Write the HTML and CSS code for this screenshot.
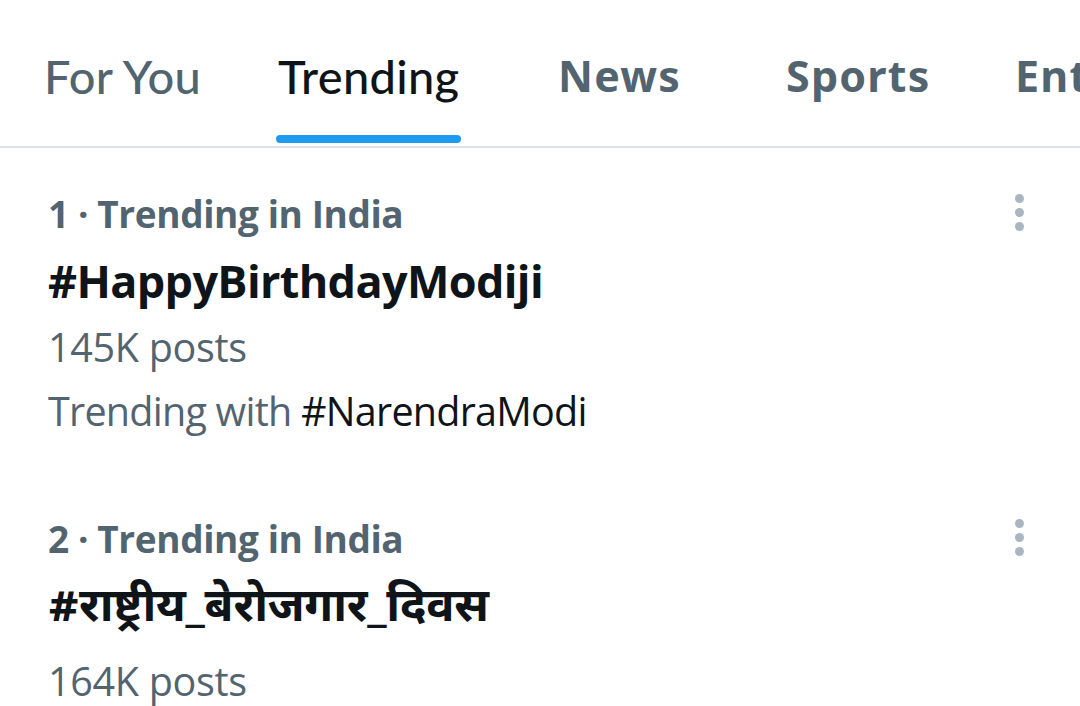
FILE: index.html
```html
<!DOCTYPE html>
<html lang="en">
<head>
<meta charset="utf-8">
<link rel="stylesheet" href="styles.css">
</head>
<body>
<nav class="tabs">
  <div class="tab tab-foryou"><span class="tab-label">For You</span></div>
  <div class="tab tab-trending active"><span class="tab-inner"><span class="tab-label">Trending</span><span class="tab-bar"></span></span></div>
  <div class="tab tab-news"><span class="tab-label bold">News</span></div>
  <div class="tab tab-sports"><span class="tab-label bold">Sports</span></div>
  <div class="tab tab-ent"><span class="tab-label bold">Entertainment</span></div>
</nav>
<main class="list">
  <section class="trend">
    <div class="trend-body">
      <div class="trend-meta">1 · Trending in India</div>
      <div class="trend-title">#HappyBirthdayModiji</div>
      <div class="trend-count">145K posts</div>
      <div class="trend-with">Trending with <span class="trend-tag">#NarendraModi</span></div>
    </div>
    <div class="more"><span class="dot"></span><span class="dot"></span><span class="dot"></span></div>
  </section>
  <section class="trend">
    <div class="trend-body">
      <div class="trend-meta">2 · Trending in India</div>
      <div class="trend-title hindi">#राष्ट्रीय_बेरोजगार_दिवस</div>
      <div class="trend-count">164K posts</div>
    </div>
    <div class="more"><span class="dot"></span><span class="dot"></span><span class="dot"></span></div>
  </section>
</main>
</body>
</html>
```
FILE: styles.css
```css
html, body {
  margin: 0;
  padding: 0;
  background: #ffffff;
  overflow: hidden;
}
body {
  width: 1080px;
  height: 706px;
  font-family: "Open Sans", "Noto Sans", sans-serif;
  color: #0f1419;
}
.tabs {
  display: flex;
  border-bottom: 2px solid #dfe3e6;
  padding-left: 44px;
  box-sizing: border-box;
  height: 148px;
  white-space: nowrap;
  overflow: hidden;
}
.tab {
  flex: none;
  display: flex;
  align-items: flex-start;
  padding-top: 49px;
}
.tab-foryou { width: 234px; }
.tab-trending { width: 280px; }
.tab-news { width: 228px; }
.tab-sports { width: 229px; }
.tab-ent { width: 200px; }
.tab-label {
  font-family: "Lato", sans-serif;
  font-size: 47px;
  line-height: 54px;
  color: #536471;
  font-weight: 500;
  letter-spacing: 0.3px;
}
.tab-label.bold {
  font-family: "Noto Sans", sans-serif;
  font-weight: 700;
  font-size: 43px;
  letter-spacing: 1.2px;
}
.active .tab-label {
  color: #0f1419;
}
.tab-inner {
  display: inline-flex;
  flex-direction: column;
  align-items: stretch;
}
.tab-bar {
  display: block;
  height: 8px;
  margin: 32px -2px 0;
  border-radius: 4px;
  background: #1d9bf0;
}
.list {
  padding: 0 0 0 48px;
}
.trend {
  display: flex;
  justify-content: space-between;
  padding-top: 40px;
  height: 285px;
}
.trend-body {
  display: flex;
  flex-direction: column;
}
.trend-meta {
  font-size: 37px;
  font-weight: 700;
  line-height: 52px;
  color: #536471;
  letter-spacing: -0.4px;
}
.trend-title {
  font-size: 45px;
  font-weight: 700;
  line-height: 81px;
  color: #0f1419;
  letter-spacing: -0.65px;
}
.trend-title.hindi {
  font-family: "Noto Sans Devanagari", "Lohit Devanagari", "Noto Sans", sans-serif;
  font-size: 47px;
  line-height: 90px;
  letter-spacing: -0.3px;
}
.trend-count {
  font-size: 39.5px;
  line-height: 53.4px;
  color: #536471;
  letter-spacing: -0.3px;
}
.trend-with {
  font-size: 39.5px;
  line-height: 74.6px;
  color: #536471;
  letter-spacing: -0.75px;
}
.trend-tag {
  color: #0f1419;
}
.more {
  display: flex;
  flex-direction: column;
  gap: 5px;
  width: 9px;
  margin-right: 56px;
  padding-top: 6px;
}
.dot {
  display: block;
  width: 9px;
  height: 9px;
  border-radius: 50%;
  background: #aab6bf;
}
```
